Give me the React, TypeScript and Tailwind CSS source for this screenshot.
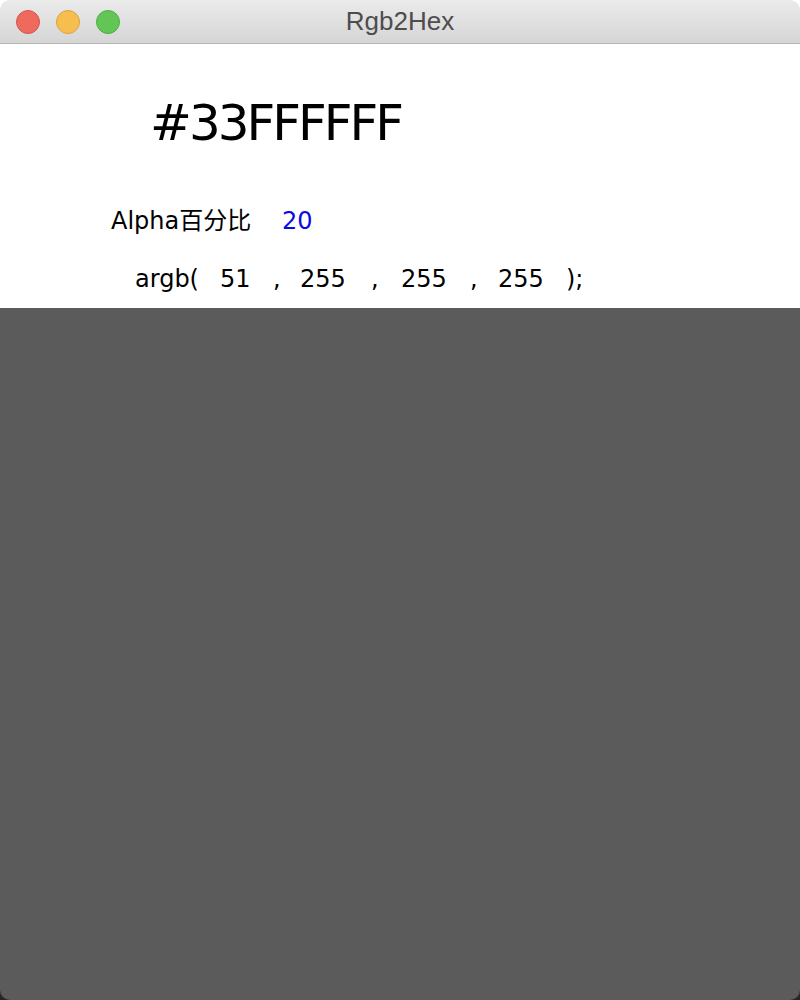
const cells: [string, string][] = [
  ["argb(", "w-[85px]"],
  ["51", "w-[53px]"],
  [",", "w-[27px]"],
  ["255", "w-[71px]"],
  [",", "w-[30px]"],
  ["255", "w-[69px]"],
  [",", "w-[28px]"],
  ["255", "w-[68px]"],
  [");", ""],
];

const TrafficLight = ({ color, border }: { color: string; border: string }) => (
  <span className={`block w-[24px] h-[24px] rounded-full border ${color} ${border}`} />
);

const App = () => (
  <div className="w-[800px] h-[1000px] bg-[linear-gradient(to_bottom,#ffffff_50%,#262626_50%)]">
    <div className="flex flex-col h-full rounded-[10px] overflow-hidden">
      <header className="relative h-[44px] flex items-center shrink-0 bg-[linear-gradient(to_bottom,#ebebeb,#d5d5d5)] border-b border-[#b4b4b4]">
        <div className="flex gap-[16px] pl-[16px]">
          <TrafficLight color="bg-[#ee6a5e]" border="border-[#d5564b]" />
          <TrafficLight color="bg-[#f5be4f]" border="border-[#d9a33e]" />
          <TrafficLight color="bg-[#62c655]" border="border-[#4fae43]" />
        </div>
        <div className="absolute inset-0 flex items-center justify-center text-[26px] text-[#4d4d4d] font-['Liberation_Sans',sans-serif]">
          Rgb2Hex
        </div>
      </header>

      <main className="h-[264px] shrink-0 bg-white text-black font-['DejaVu_Sans','Noto_Sans_CJK_SC',sans-serif]">
        <div className="mt-[54px] pl-[150px] text-[50px] leading-none tracking-[-3px]">#33FFFFFF</div>
        <div className="mt-[61px] pl-[111px] flex text-[24px] leading-none">
          <span className="w-[171px]">Alpha百分比</span>
          <span className="text-[#0a0ae6]">20</span>
        </div>
        <div className="mt-[34px] pl-[135px] flex text-[24px] leading-none">
          {cells.map(([t, w], i) => (
            <span key={i} className={w}>{t}</span>
          ))}
        </div>
      </main>

      <section className="flex-1 bg-[#5b5b5b]" />
    </div>
  </div>
);

export default App;
